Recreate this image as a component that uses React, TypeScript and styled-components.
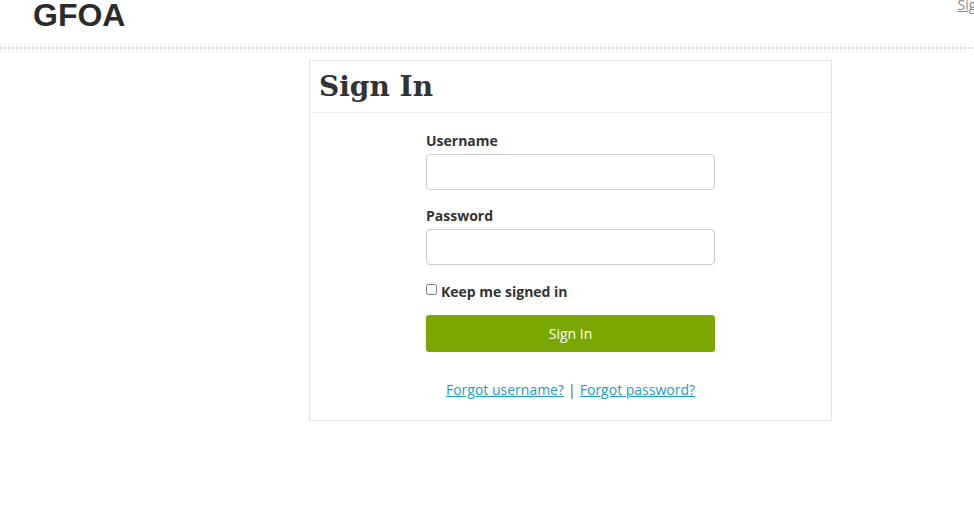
import React from "react";
import styled, { createGlobalStyle } from "styled-components";

const GlobalStyle = createGlobalStyle`
  html, body {
    margin: 0;
    padding: 0;
    background: #ffffff;
    overflow: hidden;
  }

  body {
    font-family: "Open Sans", "Liberation Sans", sans-serif;
    color: #333333;
  }
`;

const Header = styled.header`
  display: flex;
  justify-content: space-between;
  align-items: flex-start;
  height: 47px;
  padding: 0 0 0 33px;
  border-bottom: 2px dotted #dcdcdc;
`;

const Logo = styled.div`
  font-family: "Liberation Sans", Arial, sans-serif;
  font-weight: 700;
  font-size: 32px;
  line-height: 37px;
  margin-top: -3px;
  color: #2b2b2b;
`;

const TopLink = styled.a`
  font-family: "Open Sans", sans-serif;
  font-size: 14px;
  line-height: 18px;
  margin-top: -4px;
  margin-right: -27px;
  color: #8a8a8a;
  text-decoration: underline;
  white-space: nowrap;
`;

const Main = styled.main`
  padding: 11px 0 0 309px;
`;

const Card = styled.section`
  width: 521px;
  border: 1px solid #e2e2e2;
`;

const CardHeader = styled.div`
  height: 51px;
  display: flex;
  align-items: center;
  padding: 0 9px;
  border-bottom: 1px solid #efefef;
`;

const Title = styled.h1`
  margin: 0;
  font-family: "DejaVu Serif", "Liberation Serif", serif;
  font-weight: 700;
  font-size: 28px;
  letter-spacing: 0;
  color: #333333;
`;

const Form = styled.form`
  width: 289px;
  margin-left: 116px;
  padding: 18px 0 20px;
  display: flex;
  flex-direction: column;
`;

const Label = styled.label`
  font-size: 14px;
  line-height: 20px;
  font-weight: 700;
  color: #333333;
  margin-bottom: 3px;
`;

const Input = styled.input`
  box-sizing: border-box;
  height: 36px;
  width: 100%;
  border: 1px solid #cccccc;
  border-radius: 4px;
  margin-bottom: 16px;
  padding: 0 8px;
  font-size: 14px;
`;

const CheckRow = styled.label`
  display: flex;
  align-items: center;
  gap: 4px;
  height: 20px;
  font-size: 14px;
  font-weight: 700;
  color: #333333;
  margin-bottom: 14px;
`;

const Check = styled.input`
  margin: -3px 0 0 0;
  width: 11px;
  height: 11px;
`;

const Button = styled.button`
  height: 37px;
  width: 100%;
  border: none;
  border-radius: 3px;
  background: #7aa700;
  color: #ffffff;
  font-family: "Open Sans", sans-serif;
  font-size: 14px;
  cursor: pointer;
`;

const Links = styled.div`
  margin-top: 28px;
  text-align: center;
  font-size: 14px;
  line-height: 20px;
  color: #555555;
`;

const Link = styled.a`
  color: #1f9cc2;
  text-decoration: underline;
`;

const Sep = styled.span`
  margin: 0 4px;
  color: #555555;
`;

export default function App() {
  return (
    <>
      <GlobalStyle />
      <Header>
        <Logo>GFOA</Logo>
        <TopLink href="#">Sign In</TopLink>
      </Header>
      <Main>
        <Card>
          <CardHeader>
            <Title>Sign In</Title>
          </CardHeader>
          <Form onSubmit={(e) => e.preventDefault()}>
            <Label htmlFor="username">Username</Label>
            <Input id="username" type="text" />
            <Label htmlFor="password">Password</Label>
            <Input id="password" type="password" />
            <CheckRow>
              <Check type="checkbox" />
              Keep me signed in
            </CheckRow>
            <Button type="submit">Sign In</Button>
            <Links>
              <Link href="#">Forgot username?</Link>
              <Sep>|</Sep>
              <Link href="#">Forgot password?</Link>
            </Links>
          </Form>
        </Card>
      </Main>
    </>
  );
}
